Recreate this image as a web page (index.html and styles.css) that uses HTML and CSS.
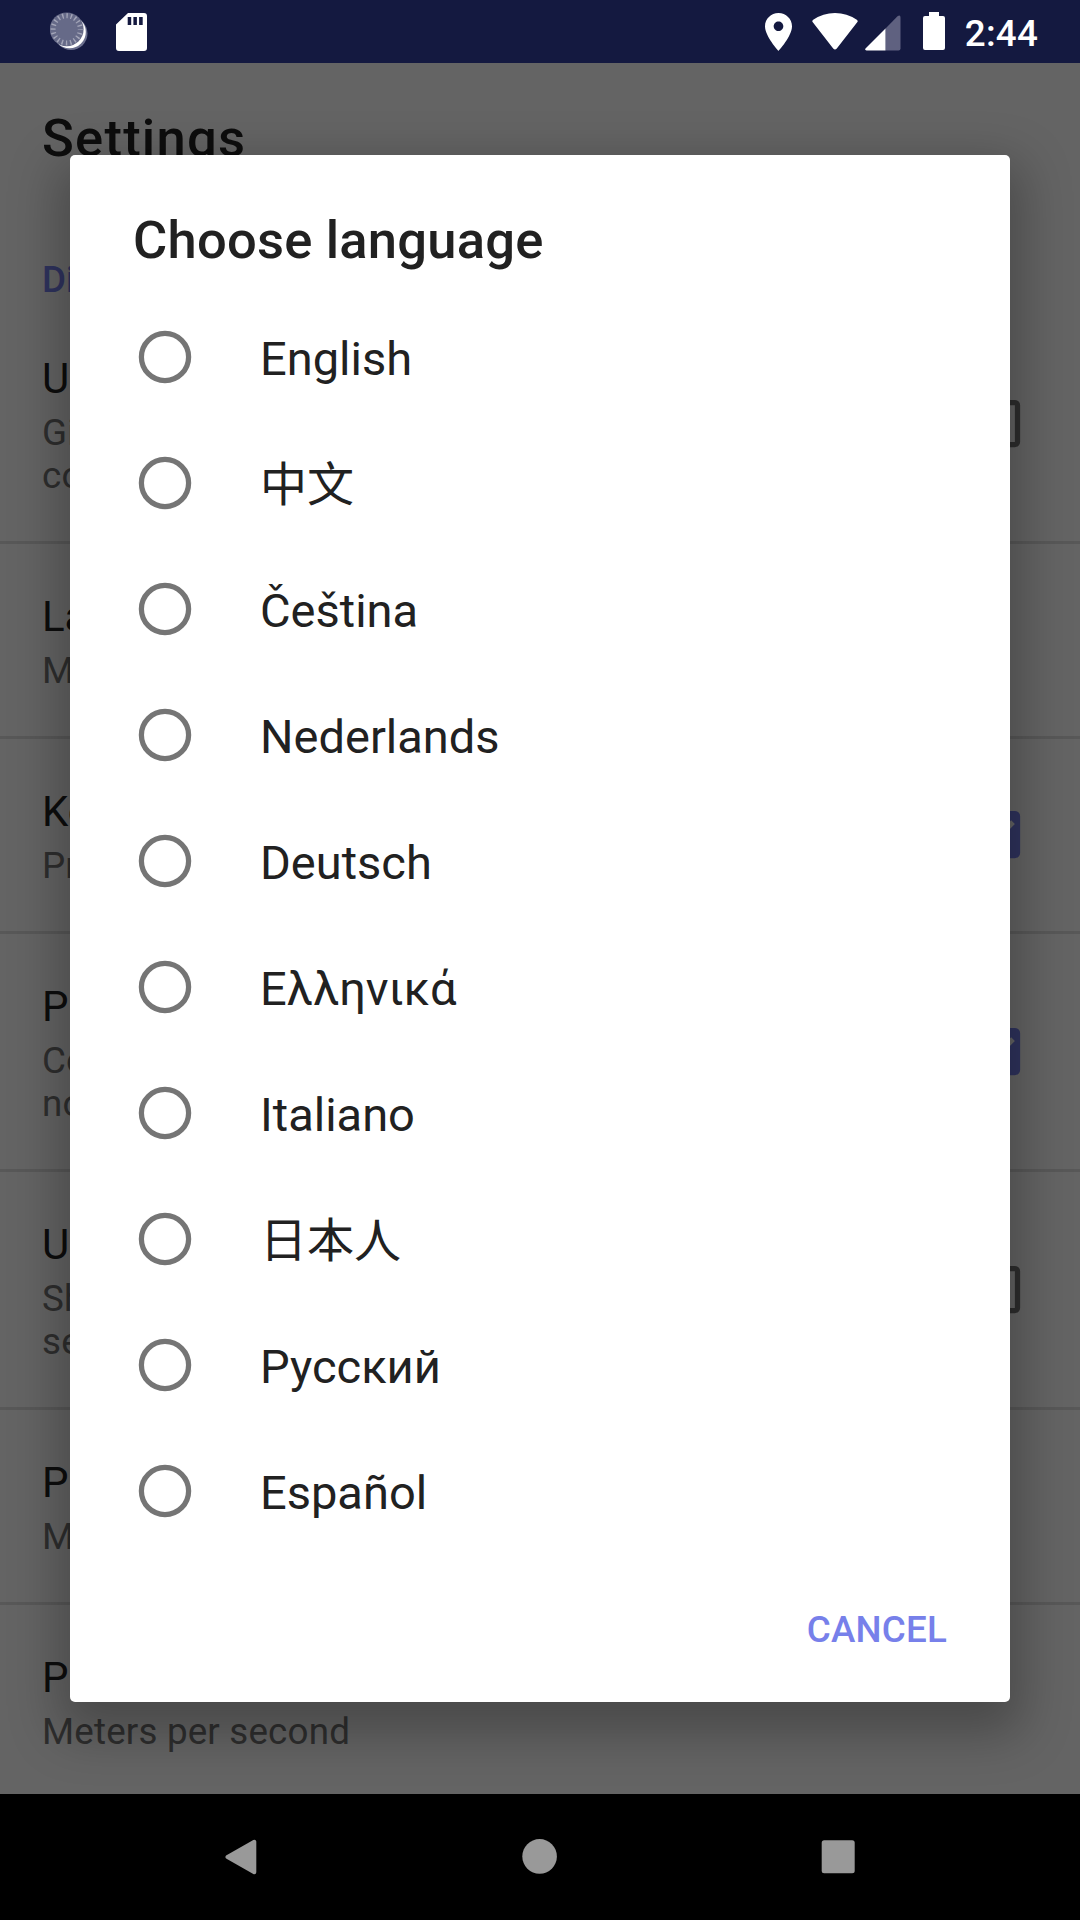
FILE: index.html
```html
<!DOCTYPE html>
<html lang="en">
<head>
<meta charset="utf-8">
<title>Settings</title>
<link rel="stylesheet" href="styles.css">
</head>
<body>
<div class="screen">
  <header class="status-bar">
    <div class="status-left">
      <svg class="icon-sync" viewBox="0 0 38 40" width="38" height="40">
        <circle cx="21" cy="21.5" r="16.5" fill="#6b6f8e"/>
        <circle cx="19.500" cy="20" r="16.3" fill="#fff"/>
        <circle cx="16.7" cy="17.3" r="16.9" fill="#666a88"/>
        <circle cx="16.7" cy="17.3" r="13.6" fill="none" stroke="#a3a5b8" stroke-width="5" stroke-dasharray="1.4 2.873" stroke-dashoffset=".7"/>
      </svg>
      <svg class="icon-sd" viewBox="0 0 31 38" width="31" height="38">
        <path fill="#fff" fill-rule="evenodd" d="M12 0H28a3 3 0 0 1 3 3V35a3 3 0 0 1-3 3H3a3 3 0 0 1-3-3V11.500ZM11.700 4V12H15.200V4ZM17.400 4V12H20.900V4ZM23.100 4V12H26.700V4Z"/>
      </svg>
    </div>
    <div class="status-right">
      <svg class="icon-pin" viewBox="5 2 14 20" width="27" height="38" preserveAspectRatio="none">
        <path fill="#fff" d="M12 2C8.130 2 5 5.130 5 9c0 5.250 7 13 7 13s7-7.750 7-13c0-3.870-3.130-7-7-7zm0 9.500c-1.380 0-2.500-1.120-2.500-2.500s1.120-2.500 2.500-2.500 2.500 1.120 2.500 2.500-1.120 2.500-2.500 2.500z"/>
      </svg>
      <svg class="icon-wifi" viewBox="0 0 46 37" width="46" height="37">
        <path fill="#fff" d="M.8 9.300Q-.4 8 1.200 6.800Q11 0 23 0T44.800 6.800Q46.400 8 45.200 9.300L24.800 35.500Q23 37.500 21.200 35.500Z"/>
      </svg>
      <svg class="icon-signal" viewBox="0 0 36 36" width="36" height="36">
        <path fill="#5f6180" d="M20.500 13.500L32.500 1.300Q35.500-.6 35.500 2.500V33.500Q35.500 35.500 33.500 35.500H20.500Z"/>
        <path fill="#fff" d="M20.500 13.500V35.500H1.500Q-1 35 1 33Z"/>
      </svg>
      <svg class="icon-battery" viewBox="0 0 22 38" width="22" height="38">
        <path fill="#fff" d="M6 0H16V4H20Q22 4 22 6V36Q22 38 20 38H2Q0 38 0 36V6Q0 4 2 4H6Z"/>
      </svg>
      <span class="clock">2:44</span>
    </div>
  </header>

  <main class="settings">
    <h1 class="page-title">Settings</h1>
    <h2 class="category">Display</h2>
    <section class="pref">
      <div class="pref-text"><div class="pref-title">U</div><div class="pref-summary">Gi<br>co</div></div>
      <svg class="checkbox" viewBox="0 0 24 24"><path d="M19 5v14H5V5h14m0-2H5c-1.100 0-2 .9-2 2v14c0 1.100.9 2 2 2h14c1.100 0 2-.9 2-2V5c0-1.100-.9-2-2-2z"/></svg>
    </section>
    <section class="pref">
      <div class="pref-text"><div class="pref-title">La</div><div class="pref-summary">M</div></div>
    </section>
    <section class="pref">
      <div class="pref-text"><div class="pref-title">Ke</div><div class="pref-summary">Pr</div></div>
      <svg class="checkbox checked" viewBox="0 0 24 24"><path d="M19 3H5c-1.110 0-2 .9-2 2v14c0 1.100.89 2 2 2h14c1.110 0 2-.9 2-2V5c0-1.100-.89-2-2-2zm-9 14l-5-5 1.410-1.410L10 14.170l7.590-7.590L19 8l-9 9z"/></svg>
    </section>
    <section class="pref">
      <div class="pref-text"><div class="pref-title">P</div><div class="pref-summary">Co<br>no</div></div>
      <svg class="checkbox checked" viewBox="0 0 24 24"><path d="M19 3H5c-1.110 0-2 .9-2 2v14c0 1.100.89 2 2 2h14c1.110 0 2-.9 2-2V5c0-1.100-.89-2-2-2zm-9 14l-5-5 1.410-1.410L10 14.170l7.590-7.590L19 8l-9 9z"/></svg>
    </section>
    <section class="pref">
      <div class="pref-text"><div class="pref-title">U</div><div class="pref-summary">Sh<br>se</div></div>
      <svg class="checkbox" viewBox="0 0 24 24"><path d="M19 5v14H5V5h14m0-2H5c-1.100 0-2 .9-2 2v14c0 1.100.9 2 2 2h14c1.100 0 2-.9 2-2V5c0-1.100-.9-2-2-2z"/></svg>
    </section>
    <section class="pref">
      <div class="pref-text"><div class="pref-title">P</div><div class="pref-summary">M</div></div>
    </section>
    <section class="pref">
      <div class="pref-text"><div class="pref-title">P</div><div class="pref-summary">Meters per second</div></div>
    </section>
  </main>

  <nav class="nav-bar">
    <svg viewBox="0 0 36 36" width="36" height="36"><path fill="#999" stroke="#999" stroke-width="4" stroke-linejoin="round" d="M4.500 18L31.300 2.800V33.200Z"/></svg>
    <svg viewBox="0 0 36 36" width="36" height="36"><circle cx="17.600" cy="17.400" r="17.300" fill="#999"/></svg>
    <svg viewBox="0 0 36 36" width="36" height="36"><rect x=".7" y="1.300" width="33" height="33" rx="2.500" fill="#999"/></svg>
  </nav>

  <div class="overlay">
    <div class="dialog" role="dialog">
      <h2 class="dialog-title">Choose language</h2>
      <ul class="options">
        <li class="option"><svg class="radio" viewBox="0 0 54 54"><circle cx="27" cy="27" r="23.600"/></svg><span class="label">English</span></li>
        <li class="option"><svg class="radio" viewBox="0 0 54 54"><circle cx="27" cy="27" r="23.600"/></svg><span class="label" lang="zh">中文</span></li>
        <li class="option"><svg class="radio" viewBox="0 0 54 54"><circle cx="27" cy="27" r="23.600"/></svg><span class="label">Čeština</span></li>
        <li class="option"><svg class="radio" viewBox="0 0 54 54"><circle cx="27" cy="27" r="23.600"/></svg><span class="label">Nederlands</span></li>
        <li class="option"><svg class="radio" viewBox="0 0 54 54"><circle cx="27" cy="27" r="23.600"/></svg><span class="label">Deutsch</span></li>
        <li class="option"><svg class="radio" viewBox="0 0 54 54"><circle cx="27" cy="27" r="23.600"/></svg><span class="label">Ελληνικά</span></li>
        <li class="option"><svg class="radio" viewBox="0 0 54 54"><circle cx="27" cy="27" r="23.600"/></svg><span class="label">Italiano</span></li>
        <li class="option"><svg class="radio" viewBox="0 0 54 54"><circle cx="27" cy="27" r="23.600"/></svg><span class="label" lang="ja">日本人</span></li>
        <li class="option"><svg class="radio" viewBox="0 0 54 54"><circle cx="27" cy="27" r="23.600"/></svg><span class="label">Русский</span></li>
        <li class="option"><svg class="radio" viewBox="0 0 54 54"><circle cx="27" cy="27" r="23.600"/></svg><span class="label">Español</span></li>
      </ul>
      <div class="actions"><span class="cancel">CANCEL</span></div>
    </div>
  </div>
</div>
</body>
</html>
```
FILE: styles.css
```css
* { box-sizing: border-box; }

body {
  margin: 0;
  font-family: Roboto, "Noto Sans CJK SC", sans-serif;
}

h1, h2, ul { margin: 0; padding: 0; }
h1, h2 { font-weight: 500; }

.screen {
  position: relative;
  width: 1080px;
  height: 1920px;
  overflow: hidden;
  display: flex;
  flex-direction: column;
  background: #fafafa;
}

.status-bar {
  height: 63px;
  flex: none;
  display: flex;
  justify-content: space-between;
  padding: 12px 42px 0 50px;
  background: #141940;
}

.status-left, .status-right { display: flex; align-items: flex-start; }
.icon-sd { margin: 1px 0 0 28px; }
.icon-pin { margin-top: 1px; }
.icon-wifi { margin: 1px 0 0 20px; }
.icon-signal { margin: 3px 0 0 7px; }
.icon-battery { margin-left: 22px; }

.clock {
  margin-left: 20px;
  color: #fff;
  font-size: 36.75px;
  font-weight: 500;
  line-height: 43px;
  letter-spacing: .2px;
}

.settings {
  flex: 1;
  min-height: 0;
  overflow: hidden;
  color: #212121;
}

.page-title {
  padding: 44px 42px 0;
  font-size: 52.5px;
  line-height: 62px;
  letter-spacing: 1.25px;
}

.category {
  padding: 89px 42px 5px;
  color: #7780ea;
  font-size: 36.75px;
  line-height: 43px;
}

.pref {
  display: flex;
  align-items: center;
  justify-content: space-between;
  padding: 0 52px 0 42px;
  border-bottom: 3px solid #dcdcdc;
}

.pref-text { padding: 45px 0 44px; }
.pref-title { font-size: 42px; line-height: 56px; }
.pref-summary {
  margin-top: 4px;
  color: #737373;
  font-size: 36.75px;
  line-height: 43px;
  letter-spacing: .18px;
}

.checkbox { width: 63px; height: 63px; margin-bottom: 1px; fill: #737373; }
.checked { fill: #7780ea; }

.nav-bar {
  flex: none;
  height: 126px;
  display: flex;
  align-items: center;
  justify-content: center;
  gap: 263px;
  background: #000;
}

/* Dims everything between the system bars */
.overlay {
  position: absolute;
  inset: 63px 0 126px;
  display: flex;
  flex-direction: column;
  align-items: center;
  justify-content: center;
  background: rgba(0, 0, 0, .6);
}

.dialog {
  width: 940px;
  height: 1547px;
  border-radius: 5px;
  background: #fff;
  color: #212121;
  box-shadow: 0 20px 50px 12px rgba(0, 0, 0, .27);
}

.dialog-title {
  padding: 54px 63px 0;
  font-size: 52.5px;
  line-height: 62px;
  letter-spacing: .22px;
}

.options { padding-top: 23px; list-style: none; }

.option {
  height: 126px;
  display: flex;
  align-items: center;
  padding-left: 68px;
}

.radio {
  width: 54px;
  height: 54px;
  fill: none;
  stroke: #757575;
  stroke-width: 5.25px;
}

.label {
  margin-left: 68px;
  padding-top: 4px;
  font-size: 47px;
  line-height: 64px;
}

.actions {
  display: flex;
  justify-content: flex-end;
  padding: 54px 63px 0;
}

.cancel {
  color: #7780ea;
  font-size: 36.75px;
  font-weight: 500;
  line-height: 43px;
  letter-spacing: .2px;
}
```
